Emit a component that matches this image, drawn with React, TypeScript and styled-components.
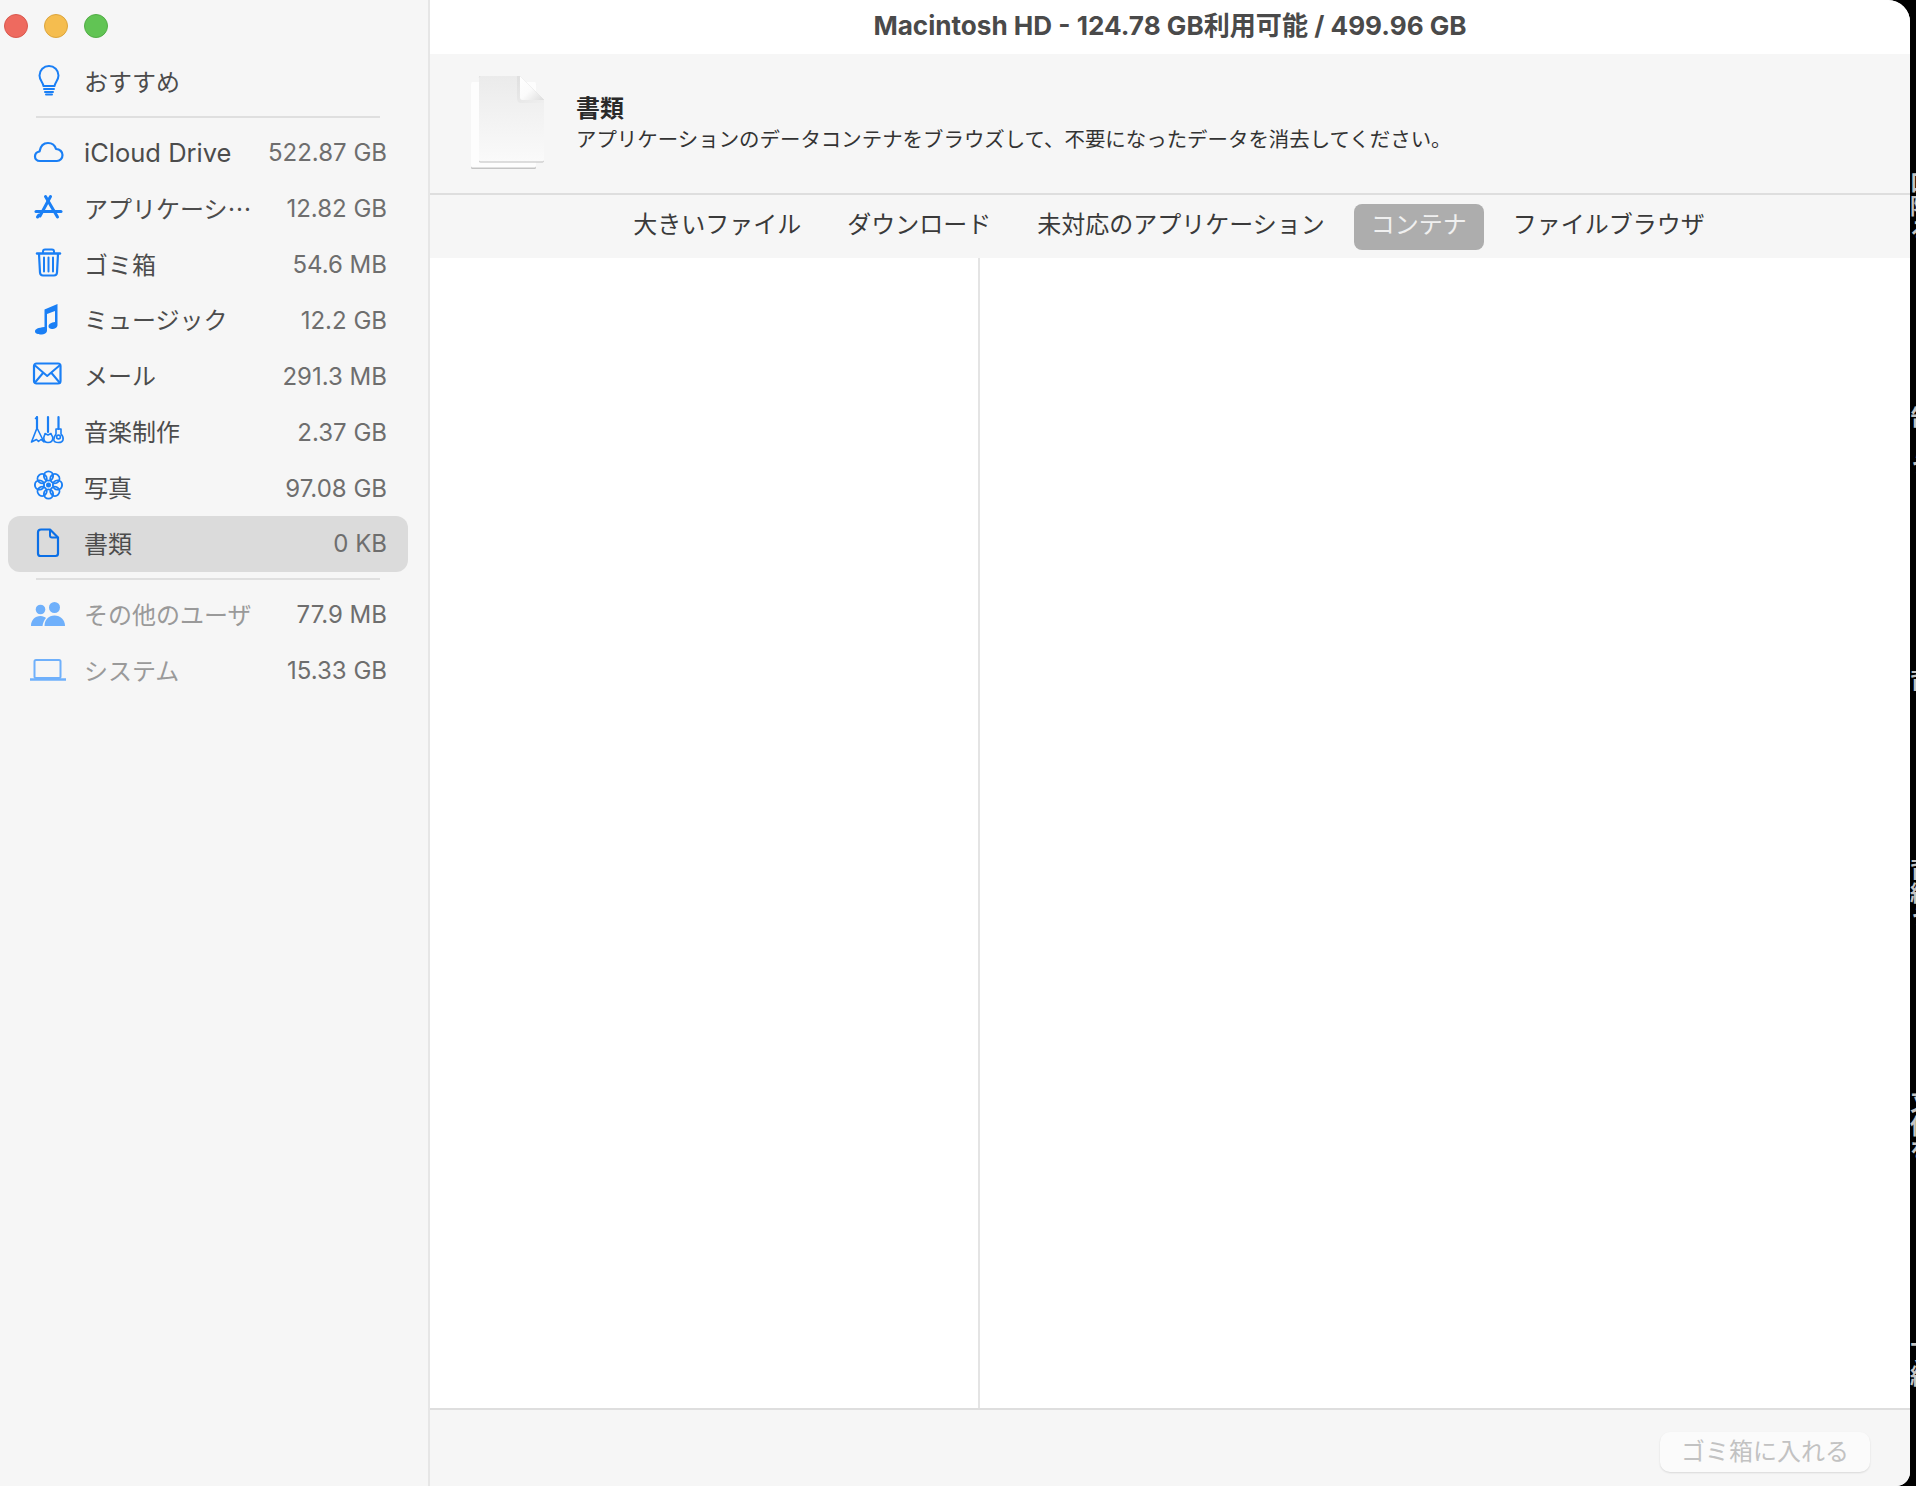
import React from "react";
import styled, { createGlobalStyle } from "styled-components";

const Global = createGlobalStyle`
  html, body { margin: 0; padding: 0; background: #000; }
  body { font-family: Inter, "Noto Sans CJK JP", sans-serif; }
  #root { width: 1916px; height: 1486px; overflow: hidden; }
`;

const Screen = styled.div`
  display: flex;
  width: 1916px;
  height: 1486px;
  background: #000;
  overflow: hidden;
`;
const Win = styled.div`
  flex: none;
  width: 1910px;
  height: 1486px;
  display: flex;
  background: #fff;
  border-radius: 0 22px 14px 0;
  overflow: hidden;
`;
const Strip = styled.div`
  flex: none;
  width: 6px;
  height: 1486px;
  overflow: hidden;
  display: flex;
  flex-direction: column;
  color: #c4c4c4;
  font: 700 22px/24px "Noto Sans CJK JP", sans-serif;
  white-space: pre;
`;
const StripText = styled.div<{ $gap: number }>`
  margin-top: ${(p) => p.$gap}px;
`;

const Sidebar = styled.aside`
  flex: none;
  width: 400px;
  height: 100%;
  background: #f6f6f6;
  border-right: 2px solid #e6e6e6;
  display: flex;
  flex-direction: column;
  align-items: stretch;
  padding: 0 20px 0 8px;
  box-sizing: content-box;
`;
const Lights = styled.div`
  height: 54px;
  margin-left: -4px;
  padding-bottom: 2px;
  box-sizing: border-box;
  display: flex;
  align-items: center;
  gap: 16px;
`;
const Light = styled.span<{ $c: string; $b: string }>`
  width: 24px;
  height: 24px;
  border-radius: 50%;
  box-sizing: border-box;
  background: ${(p) => p.$c};
  border: 1px solid ${(p) => p.$b};
`;
const Row = styled.div<{ $active?: boolean }>`
  flex: none;
  height: 55.875px;
  display: flex;
  align-items: center;
  border-radius: 12px;
  padding: 0 21px 0 22px;
  background: ${(p) => (p.$active ? "#dbdbdb" : "transparent")};
  font-size: 24px;
`;
const IconBox = styled.span`
  flex: none;
  width: 36px;
  height: 36px;
  margin-right: 18px;
  display: block;
  svg { display: block; }
`;
const Label = styled.span<{ $muted?: boolean; $latin?: boolean }>`
  flex: 1;
  min-width: 0;
  white-space: nowrap;
  padding-bottom: ${(p) => (p.$latin ? 0 : 3)}px;
  font-size: ${(p) => (p.$latin ? 25.5 : 24)}px;
  color: ${(p) => (p.$muted ? "#9a9a9a" : "#4c4c4c")};
`;
const CjkEllipsis = styled.span`
  font-family: "Noto Sans CJK JP", sans-serif;
`;
const Size = styled.span`
  flex: none;
  color: #6e6e6e;
`;
const Rule = styled.div`
  flex: none;
  height: 2px;
  margin: 6px 28px 7px 28px;
  background: #dfdfdf;
`;

const Main = styled.main`
  flex: 1;
  min-width: 0;
  height: 100%;
  display: flex;
  flex-direction: column;
`;
const TitleBar = styled.header`
  flex: none;
  height: 54px;
  background: #fff;
  display: flex;
  align-items: center;
  justify-content: center;
  padding-bottom: 7px;
  box-sizing: border-box;
  color: #4a4a4a;
  font-size: 26.1px;
  font-weight: 700;
  white-space: nowrap;
`;
const Header = styled.section`
  flex: none;
  height: 139px;
  box-sizing: border-box;
  background: #f6f6f6;
  display: flex;
  align-items: center;
  padding-left: 41px;
  gap: 29px;
`;
const HeaderText = styled.div`
  display: flex;
  flex-direction: column;
  margin-top: 1px;
`;
const HeaderTitle = styled.div`
  font-size: 24px;
  line-height: 32px;
  font-weight: 700;
  color: #2a2a2a;
`;
const HeaderDesc = styled.div`
  font-size: 20.45px;
  line-height: 30px;
  color: #333;
  white-space: nowrap;
`;
const Tabs = styled.nav`
  flex: none;
  height: 65px;
  box-sizing: border-box;
  background: #f6f6f6;
  border-top: 2px solid #dedede;
  padding: 9px 2px 0 0;
  display: flex;
  justify-content: center;
  align-items: flex-start;
  gap: 14px;
`;
const Tab = styled.div<{ $active?: boolean }>`
  height: 46px;
  box-sizing: border-box;
  padding: 0 ${(p) => (p.$active ? 17 : 16)}px 9px;
  margin: 0 ${(p) => (p.$active ? -1 : 0)}px;
  border-radius: 8px;
  display: flex;
  align-items: center;
  font-size: 24px;
  white-space: nowrap;
  color: ${(p) => (p.$active ? "#f0f0f0" : "#3a3a3a")};
  background: ${(p) => (p.$active ? "#adadad" : "transparent")};
`;
const Panels = styled.section`
  flex: 1;
  min-height: 0;
  display: flex;
  background: #fff;
`;
const LeftPanel = styled.div`
  flex: none;
  width: 548px;
  border-right: 2px solid #e4e4e4;
`;
const Footer = styled.footer`
  flex: none;
  height: 78px;
  box-sizing: border-box;
  background: #f6f6f6;
  border-top: 2px solid #dedede;
  display: flex;
  justify-content: flex-end;
  align-items: flex-start;
  padding: 22px 40px 0 0;
`;
const TrashButton = styled.div`
  width: 210px;
  height: 40px;
  box-sizing: border-box;
  padding-bottom: 6px;
  border-radius: 10px;
  background: #fbfbfb;
  box-shadow: 0 1px 2px rgba(0, 0, 0, 0.12);
  display: flex;
  align-items: center;
  justify-content: center;
  color: #c2c2c2;
  font-size: 24px;
  white-space: nowrap;
`;

const Ic: React.FC<{ c?: string; children: React.ReactNode }> = ({ c = "#1a7ff5", children }) => (
  <IconBox>
    <svg width="36" height="36" viewBox="0 0 36 36" fill="none" stroke={c} strokeWidth="2" strokeLinecap="round" strokeLinejoin="round">
      {children}
    </svg>
  </IconBox>
);

const Bulb = () => (
  <Ic>
    <path d="M13.500 22C13 18.500 9.500 16 9.500 11.500A9.500 9.500 0 0 1 28.500 11.500C28.500 16 25 18.500 24.500 22Z" />
    <path d="M14 25H24M15 28H23" />
    <path d="M16 30.500H22" />
  </Ic>
);
const Cloud = () => (
  <Ic>
    <path strokeWidth="2.200" d="M10 26C6.500 26 5 23.500 5 21.500C5 18.500 7 17 9.500 16.500C10.500 11 14 8 18 8C22 8 25 10.500 26 14C30 14 32.500 17 32.500 20C32.500 23.500 30 26 27 26Z" />
  </Ic>
);
const Apps = () => (
  <Ic>
    <g strokeWidth="3">
      <path d="M20.500 5.500L10 25" />
      <path d="M15.500 5.500L27.500 26" />
      <path d="M6 20.500H31" />
      <path d="M7.500 26L9 24" />
    </g>
  </Ic>
);
const Trash = () => (
  <Ic>
    <path d="M7 6.500H30" strokeWidth="2.400" />
    <path d="M13 6V4.500Q13 2.500 15 2.500H22Q24 2.500 24 4.500V6" />
    <path d="M9 7L10 25.500Q10.200 28.500 13 28.500H24Q26.800 28.500 27 25.500L28 7" strokeWidth="2.200" />
    <path d="M14 10.500V24.500M18.500 10.500V24.500M23 10.500V24.500" />
  </Ic>
);
const Music = () => (
  <Ic>
    <path
      fill="#1a7ff5"
      stroke="none"
      d="M14.500 7.500L27.500 2V23C27.500 25.800 24.500 27 22 27C20 27 18.500 26 18.500 24.300C18.500 21.800 21.200 20.700 25 20V9L17 12V28.500C17 31.300 14 32.500 11 32.500C8.800 32.500 5 31.800 5 29.500C5 27 8 25.800 14.500 25Z"
    />
  </Ic>
);
const Mail = () => (
  <Ic>
    <rect x="4" y="5.500" width="26.500" height="20" rx="2.500" strokeWidth="2.200" />
    <path d="M5 7.500L17.200 18L29.500 7.500M5 24.500L13 15M29.500 24.500L21.500 15" />
  </Ic>
);
const Guitars = () => (
  <Ic>
    <g strokeWidth="1.600">
      <path d="M7 3V14" strokeWidth="2.200" />
      <path d="M5.500 4.500L7 3" />
      <path d="M7 14L1.500 28L6.500 25.500L8.500 27.500L11 25.500L14 28Z" />
      <path d="M18 3V18" strokeWidth="2.200" />
      <path d="M15 19.500C15 21 13.800 22 13.800 24C13.800 27 15.500 28.500 18 28.500C20.500 28.500 22.800 27 22.800 24C22.800 22 21 21 21 19.500L18 21Z" />
      <path d="M28.500 3V15" strokeWidth="2.200" />
      <path d="M26 15H31V20C33 22 33.500 24 33 26C32.500 28 31 28.500 28.500 28.500C25.500 28.500 24 28 23.800 26C23.500 24 24.500 22 26 20Z" />
      <circle cx="28.500" cy="23" r="1.900" />
    </g>
  </Ic>
);
const Photos = () => (
  <Ic>
    <g strokeWidth="1.900">
      {[0, 45, 90, 135, 180, 225, 270, 315].map((a) => (
        <circle key={a} cx="18.500" cy="6" r="4.600" transform={`rotate(${a} 18.500 15)`} />
      ))}
      <circle cx="18.500" cy="15" r="2.500" fill="#1a7ff5" stroke="none" />
    </g>
  </Ic>
);
const Doc = () => (
  <Ic c="#0b6fe6">
    <path strokeWidth="2.200" d="M11 3.500H20L28 11.500V27.500Q28 30 25.500 30H10.500Q8 30 8 27.500V6.500Q8 3.500 11 3.500Z" />
    <path strokeWidth="2" d="M20 4V9.500Q20 11.500 22 11.500H27.500" />
  </Ic>
);
const Users = () => (
  <Ic c="#6fb0fb">
    <g fill="#6fb0fb" stroke="none">
      <circle cx="10.500" cy="12.500" r="4.800" />
      <circle cx="24.500" cy="10.500" r="5.500" />
      <path d="M1 29C1 23 5 19 10.500 19C13 19 15 20 16 21C14 23 13 26 12.500 29Z" />
      <path d="M14.500 29C14.500 23 18.500 18.500 24.500 18.500C30.500 18.500 35 23 35 29Z" />
    </g>
  </Ic>
);
const Laptop = () => (
  <Ic c="#6fb0fb">
    <rect x="4.500" y="7" width="26" height="18" rx="1.500" strokeWidth="2" />
    <path d="M0.500 26.500H35.500" strokeWidth="2.600" />
  </Ic>
);

const BigDoc = () => (
  <svg width="76" height="98" viewBox="0 0 76 98" style={{ display: "block", flex: "none" }}>
    <defs>
      <linearGradient id="pg" x1="0" y1="0" x2="0" y2="1">
        <stop offset="0" stopColor="#ebebeb" />
        <stop offset="1" stopColor="#fafafa" />
      </linearGradient>
      <linearGradient id="fold" x1="0" y1="0" x2="1" y2="1">
        <stop offset="0" stopColor="#fff" />
        <stop offset="0.5" stopColor="#fbfbfb" />
        <stop offset="1" stopColor="#dcdcdc" />
      </linearGradient>
      <linearGradient id="sh" x1="0" y1="0" x2="1" y2="1">
        <stop offset="0" stopColor="#d8d8d8" />
        <stop offset="1" stopColor="#efefef" />
      </linearGradient>
    </defs>
    <rect x="0" y="8" width="65" height="86" rx="1.500" fill="#c4c4c4" />
    <rect x="0" y="7" width="65" height="85.500" rx="1.500" fill="#fdfdfd" />
    <path d="M8 2.500Q8 1 9.500 1H49L73 25V85.500Q73 87.500 71.500 87.500H9.500Q8 87.500 8 86Z" fill="#bdbdbd" />
    <path d="M8 2.500Q8 1 9.500 1H49L73 25V85Q73 86.500 71.500 86.500H9.500Q8 86.500 8 85Z" fill="url(#pg)" />
    <path d="M49 1V22Q49 25 52 25H73V28H50Q46 28 46 23V1Z" fill="url(#sh)" opacity="0.6" />
    <path d="M49 1V22Q49 25 52 25H73Z" fill="url(#fold)" />
  </svg>
);

const rows: { name: string; size: string; icon: React.ReactNode; active?: boolean; latin?: boolean }[] = [
  { name: "iCloud Drive", size: "522.87 GB", icon: <Cloud />, latin: true },
  { name: "アプリケーシ", size: "12.82 GB", icon: <Apps /> },
  { name: "ゴミ箱", size: "54.6 MB", icon: <Trash /> },
  { name: "ミュージック", size: "12.2 GB", icon: <Music /> },
  { name: "メール", size: "291.3 MB", icon: <Mail /> },
  { name: "音楽制作", size: "2.37 GB", icon: <Guitars /> },
  { name: "写真", size: "97.08 GB", icon: <Photos /> },
  { name: "書類", size: "0 KB", icon: <Doc />, active: true },
];

const fragments: { gap: number; text: string }[] = [
  { gap: 168, text: "口\n隠\nる" },
  { gap: 163, text: "告\n\nう" },
  { gap: 191, text: "背" },
  { gap: 165, text: "背\n紹\nう" },
  { gap: 161, text: "又\n伝\nを" },
  { gap: 178, text: "丁\n紹" },
];

export default function App() {
  return (
    <Screen>
      <Global />
      <Win>
        <Sidebar>
          <Lights>
            <Light $c="#ee6a5f" $b="#d9584e" />
            <Light $c="#f5bd4f" $b="#dca53c" />
            <Light $c="#61c454" $b="#52ad46" />
          </Lights>
          <Row>
            <Bulb />
            <Label>おすすめ</Label>
          </Row>
          <Rule />
          {rows.map((r) => (
            <Row key={r.name} $active={r.active}>
              {r.icon}
              <Label $latin={r.latin}>
                {r.name}
                {r.name === "アプリケーシ" && <CjkEllipsis lang="ja">…</CjkEllipsis>}
              </Label>
              <Size>{r.size}</Size>
            </Row>
          ))}
          <Rule />
          <Row>
            <Users />
            <Label $muted>その他のユーザ</Label>
            <Size>77.9 MB</Size>
          </Row>
          <Row>
            <Laptop />
            <Label $muted>システム</Label>
            <Size>15.33 GB</Size>
          </Row>
        </Sidebar>
        <Main>
          <TitleBar>Macintosh HD - 124.78 GB利用可能 / 499.96 GB</TitleBar>
          <Header>
            <BigDoc />
            <HeaderText>
              <HeaderTitle>書類</HeaderTitle>
              <HeaderDesc>アプリケーションのデータコンテナをブラウズして、不要になったデータを消去してください。</HeaderDesc>
            </HeaderText>
          </Header>
          <Tabs>
            <Tab>大きいファイル</Tab>
            <Tab>ダウンロード</Tab>
            <Tab>未対応のアプリケーション</Tab>
            <Tab $active>コンテナ</Tab>
            <Tab>ファイルブラウザ</Tab>
          </Tabs>
          <Panels>
            <LeftPanel />
          </Panels>
          <Footer>
            <TrashButton>ゴミ箱に入れる</TrashButton>
          </Footer>
        </Main>
      </Win>
      <Strip>
        {fragments.map((f, i) => (
          <StripText key={i} $gap={f.gap}>
            {f.text}
          </StripText>
        ))}
      </Strip>
    </Screen>
  );
}
